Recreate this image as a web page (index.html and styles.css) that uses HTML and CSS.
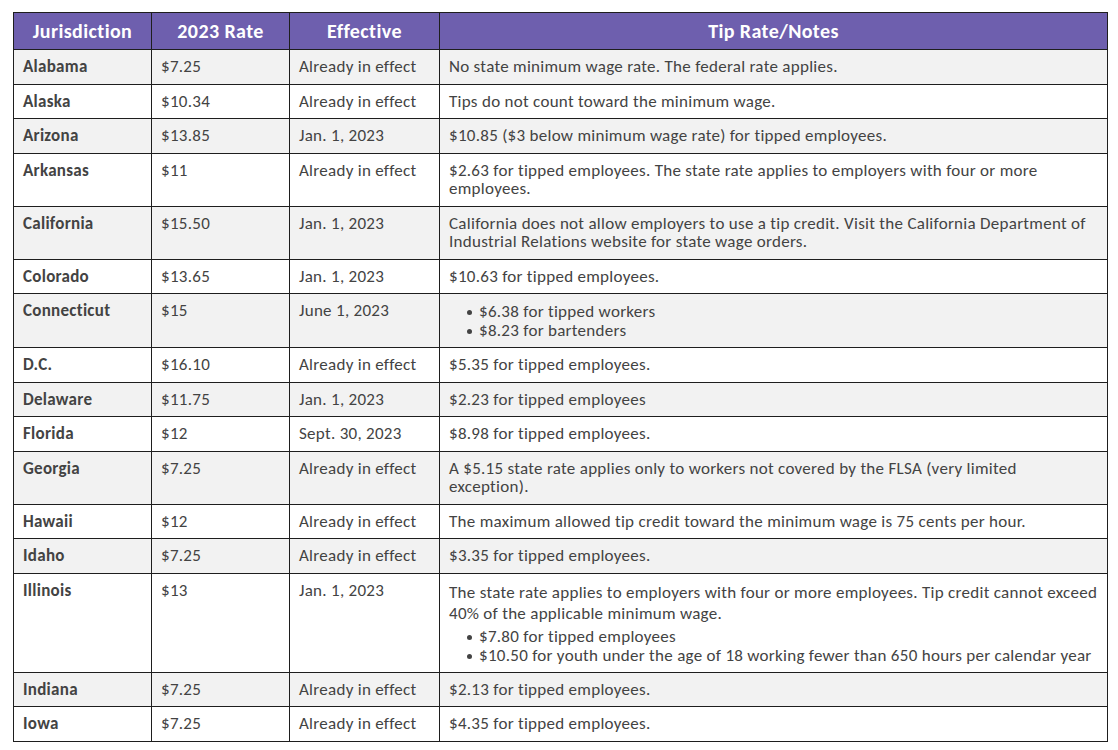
FILE: index.html
```html
<!DOCTYPE html>
<html lang="en">
<head>
<meta charset="utf-8">
<title>2023 State Minimum Wage Rates</title>
<link rel="stylesheet" href="styles.css">
</head>
<body>
<table class="wage-table">
  <colgroup>
    <col class="col-j">
    <col class="col-r">
    <col class="col-e">
    <col class="col-n">
  </colgroup>
  <thead>
    <tr>
      <th>Jurisdiction</th>
      <th>2023 Rate</th>
      <th>Effective</th>
      <th>Tip Rate/Notes</th>
    </tr>
  </thead>
  <tbody>
    <tr class="shade"><td class="state">Alabama</td><td>$7.25</td><td>Already in effect</td><td>No state minimum wage rate. The federal rate applies.</td></tr>
    <tr><td class="state">Alaska</td><td>$10.34</td><td>Already in effect</td><td>Tips do not count toward the minimum wage.</td></tr>
    <tr class="shade"><td class="state">Arizona</td><td>$13.85</td><td>Jan. 1, 2023</td><td>$10.85 ($3 below minimum wage rate) for tipped employees.</td></tr>
    <tr><td class="state">Arkansas</td><td>$11</td><td>Already in effect</td><td>$2.63 for tipped employees. The state rate applies to employers with four or more employees.</td></tr>
    <tr class="shade"><td class="state">California</td><td>$15.50</td><td>Jan. 1, 2023</td><td>California does not allow employers to use a tip credit. Visit the California Department of Industrial Relations website for state wage orders.</td></tr>
    <tr><td class="state">Colorado</td><td>$13.65</td><td>Jan. 1, 2023</td><td>$10.63 for tipped employees.</td></tr>
    <tr class="shade"><td class="state">Connecticut</td><td>$15</td><td>June 1, 2023</td><td><ul class="bullets"><li>$6.38 for tipped workers</li><li>$8.23 for bartenders</li></ul></td></tr>
    <tr><td class="state">D.C.</td><td>$16.10</td><td>Already in effect</td><td>$5.35 for tipped employees.</td></tr>
    <tr class="shade"><td class="state">Delaware</td><td>$11.75</td><td>Jan. 1, 2023</td><td>$2.23 for tipped employees</td></tr>
    <tr><td class="state">Florida</td><td>$12</td><td>Sept. 30, 2023</td><td>$8.98 for tipped employees.</td></tr>
    <tr class="shade"><td class="state">Georgia</td><td>$7.25</td><td>Already in effect</td><td>A $5.15 state rate applies only to workers not covered by the FLSA (very limited exception).</td></tr>
    <tr><td class="state">Hawaii</td><td>$12</td><td>Already in effect</td><td>The maximum allowed tip credit toward the minimum wage is 75 cents per hour.</td></tr>
    <tr class="shade"><td class="state">Idaho</td><td>$7.25</td><td>Already in effect</td><td>$3.35 for tipped employees.</td></tr>
    <tr><td class="state">Illinois</td><td>$13</td><td>Jan. 1, 2023</td><td><p class="note">The state rate applies to employers with four or more employees. Tip credit cannot exceed 40% of the applicable minimum wage.</p><ul class="bullets"><li>$7.80 for tipped employees</li><li>$10.50 for youth under the age of 18 working fewer than 650 hours per calendar year</li></ul></td></tr>
    <tr class="shade"><td class="state">Indiana</td><td>$7.25</td><td>Already in effect</td><td>$2.13 for tipped employees.</td></tr>
    <tr><td class="state">Iowa</td><td>$7.25</td><td>Already in effect</td><td>$4.35 for tipped employees.</td></tr>
  </tbody>
</table>
</body>
</html>
```
FILE: styles.css
```css
html, body {
  margin: 0;
  padding: 0;
  background: #ffffff;
}

body {
  padding: 12px 0 0 13px;
  font-family: "Carlito", "Liberation Sans", Arial, sans-serif;
  font-size: 17px;
  letter-spacing: 0.28px;
  color: #434343;
}

.wage-table {
  border-collapse: collapse;
  width: 1094px;
  table-layout: fixed;
}

.col-j { width: 138px; }
.col-r { width: 138px; }
.col-e { width: 150px; }
.col-n { width: 668px; }

.wage-table th,
.wage-table td {
  border: 1px solid #1e1e1e;
}

.wage-table th {
  background: #6e5fae;
  color: #ffffff;
  font-weight: bold;
  font-size: 20px;
  letter-spacing: 0.4px;
  height: 36px;
  padding: 0 6px;
  text-align: center;
  vertical-align: middle;
  line-height: 22px;
}

.wage-table td {
  padding: 8px 9px 7px 9px;
  line-height: 18.5px;
  vertical-align: top;
  text-align: left;
}

.wage-table tr.shade td {
  background: #f2f2f2;
}

.wage-table td.state {
  font-weight: bold;
}

.note {
  margin: 0 0 3px 0;
  line-height: 21px;
}

.bullets {
  list-style: none;
  margin: 0;
  padding: 0 0 0 30px;
}

.bullets li {
  position: relative;
  line-height: 19px;
}

.bullets li::before {
  content: "";
  position: absolute;
  left: -12px;
  top: 8px;
  width: 5px;
  height: 5px;
  border-radius: 50%;
  background: #434343;
}
```
